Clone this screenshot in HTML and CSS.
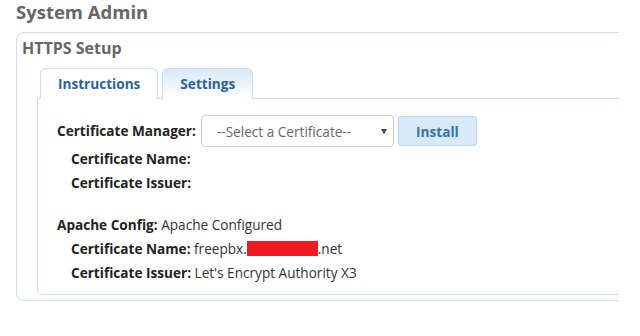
FILE: index.html
```html
<!DOCTYPE html>
<html lang="en">

<head>
  <meta charset="UTF-8">
  <meta name="viewport" content="width=device-width,initial-scale=1.0">
  <title>System Admin</title>
  <link rel="stylesheet" href="styles.css">
</head>

<body>
  <div class="page">
    <h1 class="page-title">System Admin</h1>

    <div class="section">
      <h2 class="section-title">HTTPS Setup</h2>

      <ul class="tabs">
        <li class="tab">Instructions</li>
        <li class="tab active">Settings</li>
      </ul>

      <div class="tab-panel">
        <div class="row first">
          <span class="label">Certificate Manager:</span>
          <span class="select-wrap">
            <select class="cert-select">
              <option>--Select a Certificate--</option>
            </select>
          </span>
          <button class="btn-install">Install</button>
        </div>
        <div class="row sub"><span class="label">Certificate Name:</span></div>
        <div class="row sub"><span class="label">Certificate Issuer:</span></div>

        <div class="row apache"><span class="label">Apache Config:</span> Apache Configured</div>
        <div class="row sub">
          <span class="label">Certificate Name:</span> freepbx.<span class="redacted"></span>.net
        </div>
        <div class="row sub">
          <span class="label">Certificate Issuer:</span> Let's Encrypt Authority X3
        </div>
      </div>
    </div>
  </div>
</body>

</html>
```

FILE: styles.css
```css
body {
  font-family: "Open Sans", sans-serif;
  font-size: 13.6px;
  color: #333;
  margin: 0;
  padding: 0;
  background: #fff;
}

.page {
  width: 619px;
  overflow: hidden;
}

.page-title {
  font-size: 18.5px;
  font-weight: bold;
  line-height: 24px;
  color: #666;
  margin: 0;
  padding: 0 0 8px 16px;
}

/* --------------------------------------------------------------
   section box
   -------------------------------------------------------------- */
.section {
  margin-left: 16px;
  margin-right: -40px;
  border: 1px solid #c6dff3;
  border-radius: 8px;
  padding: 4px 20px 5px 20px;
}

.section-title {
  font-size: 16px;
  font-weight: bold;
  line-height: 22px;
  color: #666;
  margin: 0 0 9px -15px;
}

.tabs {
  list-style: none;
  display: flex;
  gap: 4px;
  margin: 0 0 0 3px;
  padding: 0;
  position: relative;
  z-index: 1;
}

.tab {
  box-sizing: border-box;
  height: 31px;
  padding: 0 17px;
  line-height: 29px;
  font-weight: bold;
  color: #2e6297;
  border: 1px solid #c6dff3;
  border-bottom: none;
  border-radius: 6px 6px 0 0;
  background: #fff;
}

.tab.active {
  background: linear-gradient(#d9e9f8, #fff);
}

.tab-panel {
  border: 1px solid #c6dff3;
  border-radius: 0 0 6px 6px;
  margin-top: -1px;
  padding: 16px 20px 9px 19px;
}

/* --------------------------------------------------------------
   rows
   -------------------------------------------------------------- */
.row {
  line-height: 24px;
  color: #333;
}

.row .label {
  font-weight: bold;
  color: #222;
}

.row.first {
  display: flex;
  align-items: center;
  height: 32px;
}

.row.first .label {
  margin-right: 5px;
}

.row.sub {
  padding-left: 14px;
}

.row.apache {
  margin-top: 18px;
}

.select-wrap {
  position: relative;
  display: inline-block;
}

.select-wrap::after {
  content: "";
  position: absolute;
  right: 7px;
  top: 14px;
  border-left: 3px solid transparent;
  border-right: 3px solid transparent;
  border-top: 5px solid #444;
  pointer-events: none;
}

.cert-select {
  appearance: none;
  -webkit-appearance: none;
  box-sizing: border-box;
  width: 193px;
  height: 32px;
  padding: 0 20px 0 15px;
  font-family: "Open Sans", sans-serif;
  font-size: 13.6px;
  color: #666;
  background: #fff;
  border: 1px solid #ccc;
  border-radius: 4px;
}

.btn-install {
  box-sizing: border-box;
  width: 79px;
  height: 30px;
  margin-left: 4px;
  font-family: "Open Sans", sans-serif;
  font-size: 13.6px;
  font-weight: bold;
  color: #3471ab;
  background: #d8e9f8;
  border: 1px solid #b8d6f1;
  border-radius: 3px;
  cursor: pointer;
}

.redacted {
  display: inline-block;
  width: 71px;
  height: 15px;
  vertical-align: -2px;
  background: #ed1c24;
}
```
